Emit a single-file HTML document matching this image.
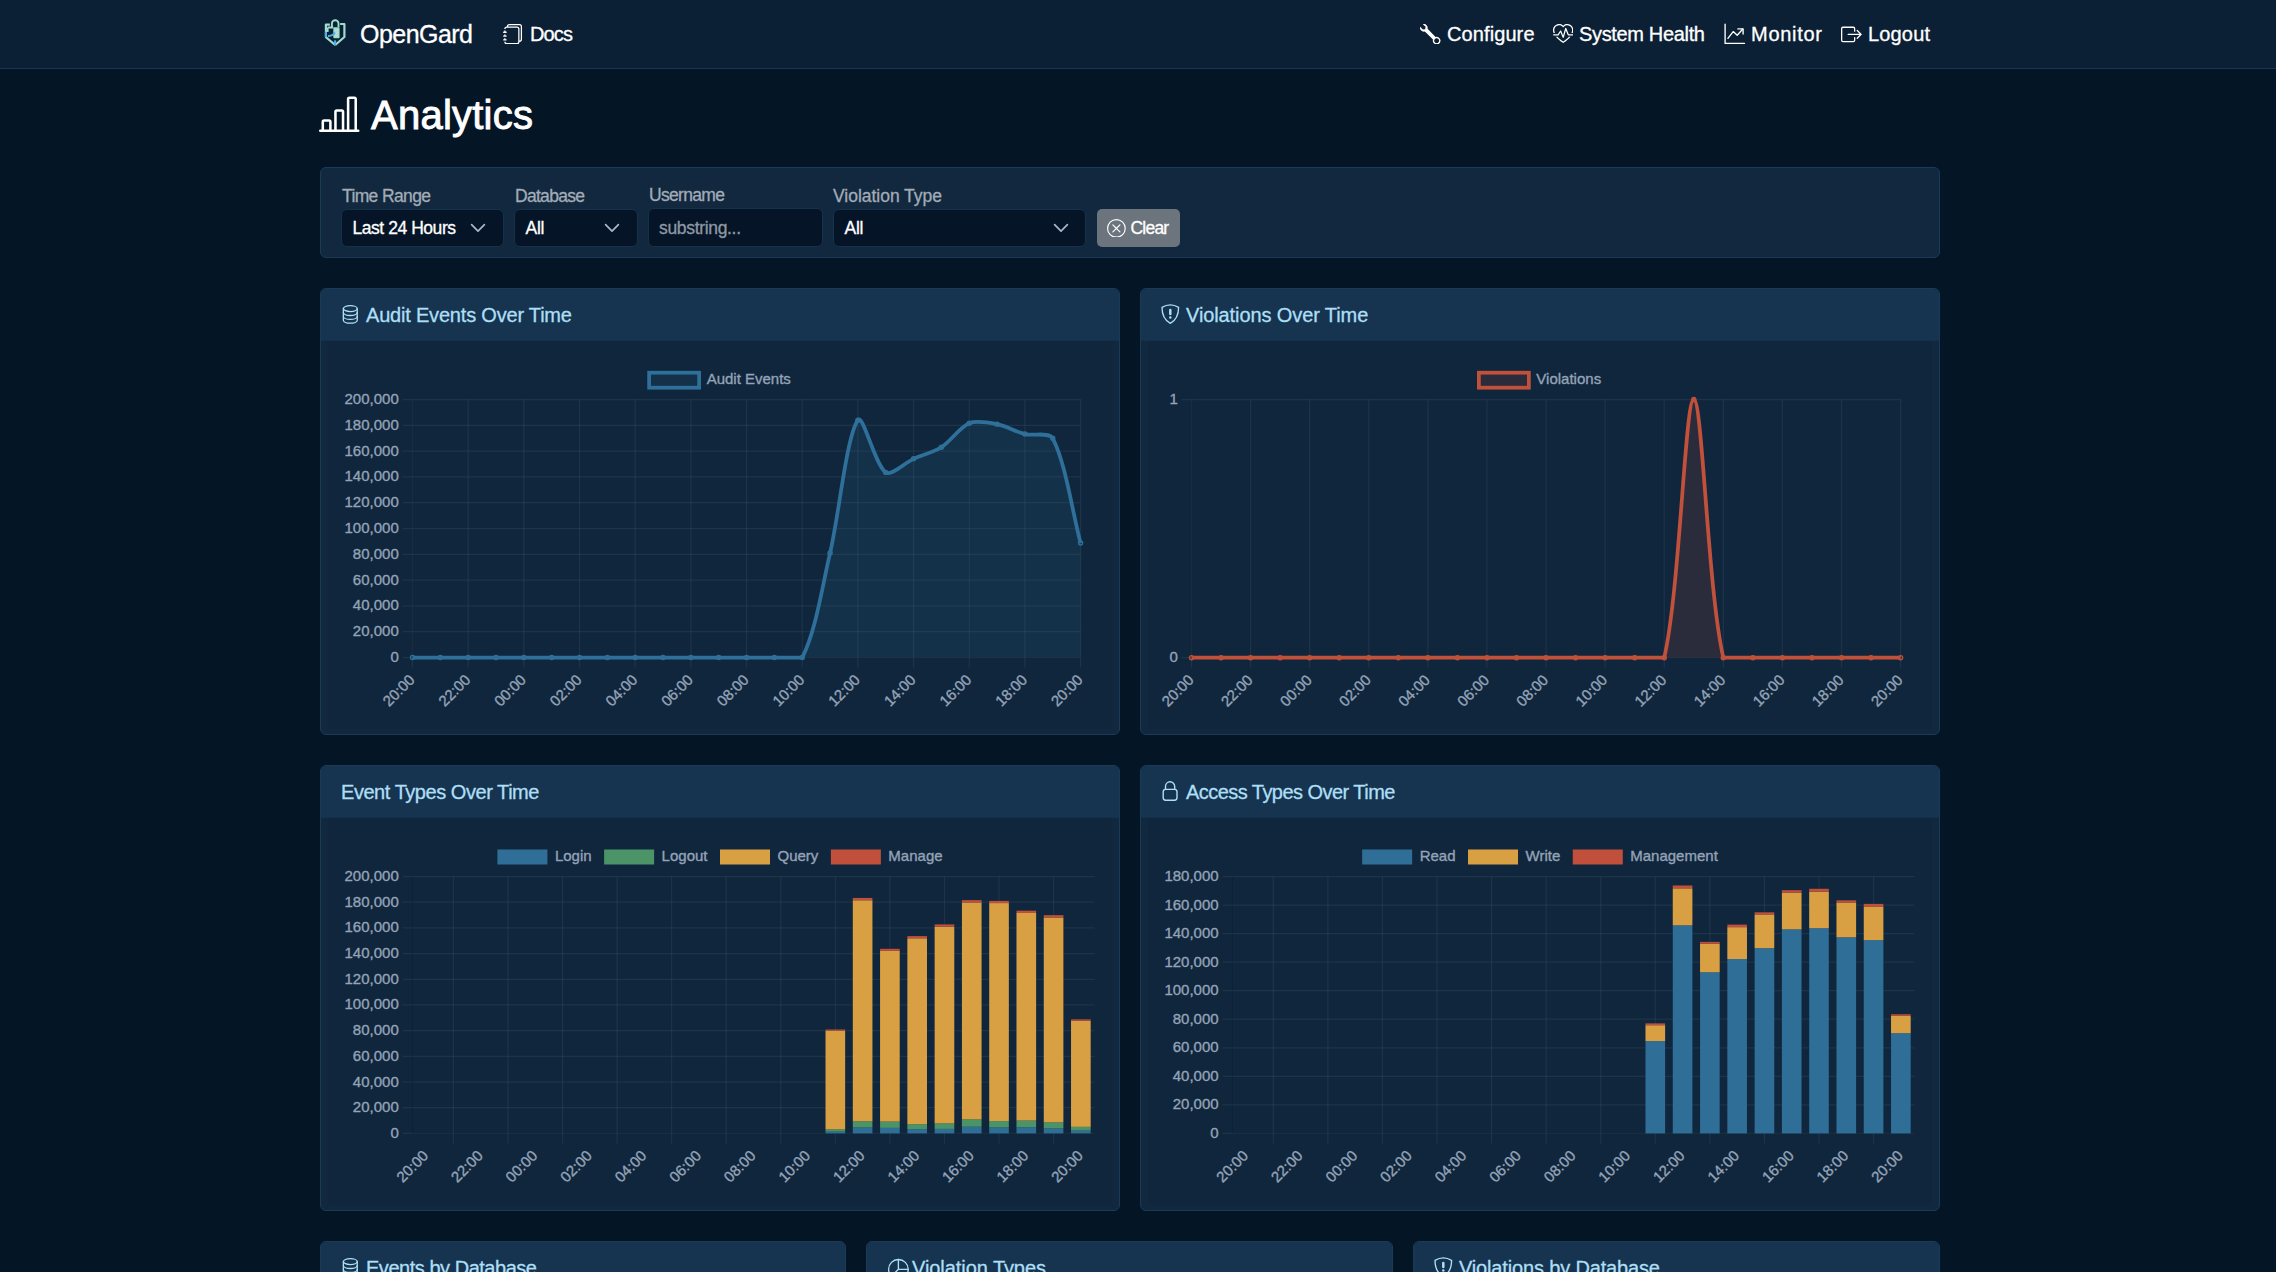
<!DOCTYPE html>
<html lang="en"><head><meta charset="utf-8"><title>OpenGard - Analytics</title>
<style>
html,body{margin:0;padding:0;background:#041526;}
body{width:2276px;height:1272px;overflow:hidden;background:#041526;position:relative;font-family:"Liberation Sans",sans-serif;}
.t{position:absolute;white-space:nowrap;line-height:1;}
svg text{font-family:"Liberation Sans",sans-serif;stroke:#94a3b8;stroke-width:0.35px;}
</style></head><body>

<nav>
<div style="position:absolute;left:0.00px;top:0.00px;width:2276.00px;height:68.00px;background:#0b1f35;border-bottom:1px solid #183651;"></div>
<svg style="position:absolute;left:318px;top:16px" width="32" height="34" viewBox="318 16 32 34">
<path d="M329.9 24.6H325.9V37.1L335.2 45M340.1 24H344.4V37L335.2 45" fill="none" stroke="#9edccd" stroke-width="2.2" stroke-linejoin="round"/>
<path d="M331.9 27.2V23.6A3.3 3.3 0 0 1 338.5 23.6V27.2" fill="none" stroke="#9edccd" stroke-width="1.9"/>
<rect x="333.3" y="27.2" width="6.3" height="11" rx="0.9" fill="#9edccd"/>
<path d="M335 30.3h3.2M335 33h3.2M335 35.7h3.2" stroke="#d8f2ec" stroke-width="0.5"/>
<path d="M327.7 27.5H333.3M327.7 27.5V32" fill="none" stroke="#9edccd" stroke-width="1.8"/>
<path d="M325.9 31.8V37.3" fill="none" stroke="#4aaee8" stroke-width="2"/>
<path d="M328 36Q332.6 36.3 335 32.6" fill="none" stroke="#4aaee8" stroke-width="1.9"/>
<path d="M335.1 40.3V45.4" stroke="#4aaee8" stroke-width="2.1"/>
</svg>
<span class="t " style="left:360.00px;top:21.83px;font-size:25.00px;color:#ffffff;font-weight:normal;letter-spacing:-0.538px;-webkit-text-stroke:0.3px #ffffff;">OpenGard</span>
<svg style="position:absolute;left:502.90px;top:23.90px" width="20.30" height="20.30" viewBox="0 0 16 16"><path fill="#ffffff" fill-rule="evenodd" d="M5 0h8a2 2 0 0 1 2 2v10a2 2 0 0 1-2 2 2 2 0 0 1-2 2H3a2 2 0 0 1-2-2h1a1 1 0 0 0 1 1h8a1 1 0 0 0 1-1V4a1 1 0 0 0-1-1H3a1 1 0 0 0-1 1H1a2 2 0 0 1 2-2h8a2 2 0 0 1 2 2v9a1 1 0 0 0 1-1V2a1 1 0 0 0-1-1H5a1 1 0 0 0-1 1H3a2 2 0 0 1 2-2zM1 6v-.5a.5.5 0 0 1 1 0V6h.5a.5.5 0 0 1 0 1h-2a.5.5 0 0 1 0-1H1zm0 3v-.5a.5.5 0 0 1 1 0V9h.5a.5.5 0 0 1 0 1h-2a.5.5 0 0 1 0-1H1zm0 3v-.5a.5.5 0 0 1 1 0V12h.5a.5.5 0 0 1 0 1h-2a.5.5 0 0 1 0-1H1z"/></svg>
<span class="t " style="left:530.00px;top:24.07px;font-size:20.00px;color:#ffffff;font-weight:normal;letter-spacing:-0.854px;-webkit-text-stroke:0.3px #ffffff;">Docs</span>
<svg style="position:absolute;left:1420.20px;top:23.60px" width="20.50" height="20.50" viewBox="0 0 16 16"><path fill="#ffffff" fill-rule="evenodd" d="M.102 2.223A3.004 3.004 0 0 0 3.78 5.897l6.341 6.252A3.003 3.003 0 0 0 13 16a3 3 0 1 0-.851-5.878L5.897 3.781A3.004 3.004 0 0 0 2.223.1l2.141 2.142L4 4l-1.757.364zm13.37 9.019.528.026.287.445.445.287.026.529L15 13l-.242.471-.026.529-.445.287-.287.445-.529.026L13 15l-.471-.242-.529-.026-.287-.445-.445-.287-.026-.529L11 13l.242-.471.026-.529.445-.287.287-.445.529-.026L13 11z"/></svg>
<span class="t " style="left:1447.00px;top:23.67px;font-size:20.00px;color:#ffffff;font-weight:normal;letter-spacing:0.098px;-webkit-text-stroke:0.3px #ffffff;">Configure</span>
<svg style="position:absolute;left:1552.50px;top:23.60px" width="20.40" height="20.40" viewBox="0 0 16 16"><path fill="#ffffff" fill-rule="evenodd" d="m8 2.748-.717-.737C5.6.281 2.514.878 1.4 3.053.918 3.995.78 5.323 1.508 7H.43c-2.128-5.697 4.165-8.83 7.394-5.857.06.055.119.112.176.171a3.12 3.12 0 0 1 .176-.17c3.23-2.974 9.522.159 7.394 5.856h-1.078c.728-1.677.59-3.005.108-3.947C13.486.878 10.4.28 8.717 2.01L8 2.748ZM2.212 10h1.315C4.593 11.183 6.05 12.458 8 13.795c1.949-1.337 3.407-2.612 4.473-3.795h1.315c-1.265 1.566-3.14 3.25-5.788 5-2.648-1.75-4.523-3.434-5.788-5ZM10.464 3.314a.5.5 0 0 0-.945.049L7.921 8.956 6.464 5.314a.5.5 0 0 0-.88-.091L3.732 8H.5a.5.5 0 0 0 0 1H4a.5.5 0 0 0 .416-.223l1.473-2.209 1.647 4.118a.5.5 0 0 0 .945-.049l1.598-5.593 1.457 3.642A.5.5 0 0 0 12 9h3.5a.5.5 0 0 0 0-1h-3.162l-1.874-4.686Z"/></svg>
<span class="t " style="left:1579.00px;top:23.67px;font-size:20.00px;color:#ffffff;font-weight:normal;letter-spacing:-0.339px;-webkit-text-stroke:0.3px #ffffff;">System Health</span>
<svg style="position:absolute;left:1718px;top:18px;overflow:visible" width="32" height="32" viewBox="1718 18 32 32" fill="none" stroke="#fff" stroke-width="1.35" stroke-linecap="round" stroke-linejoin="round"><path d="M1725.1 24.2V43.4H1744.5"/><path d="M1727.9 38.3L1733.2 31.6L1737.2 35.3L1742.6 29.2"/><path d="M1737.9 28.9H1743.1V34"/></svg>
<span class="t " style="left:1751.00px;top:23.67px;font-size:20.00px;color:#ffffff;font-weight:normal;letter-spacing:0.719px;-webkit-text-stroke:0.3px #ffffff;">Monitor</span>
<svg style="position:absolute;left:1841.00px;top:23.80px" width="20.80" height="20.80" viewBox="0 0 16 16"><path fill="#ffffff" fill-rule="evenodd" d="M10 12.5a.5.5 0 0 1-.5.5h-8a.5.5 0 0 1-.5-.5v-9a.5.5 0 0 1 .5-.5h8a.5.5 0 0 1 .5.5v2a.5.5 0 0 0 1 0v-2A1.5 1.5 0 0 0 9.5 2h-8A1.5 1.5 0 0 0 0 3.5v9A1.5 1.5 0 0 0 1.5 14h8a1.5 1.5 0 0 0 1.5-1.5v-2a.5.5 0 0 0-1 0v2zM15.854 8.354a.5.5 0 0 0 0-.708l-3-3a.5.5 0 0 0-.708.708L14.293 7.5H5.5a.5.5 0 0 0 0 1h8.793l-2.147 2.146a.5.5 0 0 0 .708.708l3-3z"/></svg>
<span class="t " style="left:1868.00px;top:23.67px;font-size:20.00px;color:#ffffff;font-weight:normal;letter-spacing:0.163px;-webkit-text-stroke:0.3px #ffffff;">Logout</span>
</nav>
<main>
<svg style="position:absolute;left:319.20px;top:93.60px" width="40.50" height="40.50" viewBox="0 0 16 16"><path fill="#ffffff" fill-rule="evenodd" d="M11 2a1 1 0 0 1 1-1h2a1 1 0 0 1 1 1v12h.5a.5.5 0 0 1 0 1H.5a.5.5 0 0 1 0-1H1v-3a1 1 0 0 1 1-1h2a1 1 0 0 1 1 1v3h1V7a1 1 0 0 1 1-1h2a1 1 0 0 1 1 1v7h1V2zm1 12h2V2h-2v12zm-3 0V7H7v7h2zm-5 0v-3H2v3h2z"/></svg>
<span class="t " style="left:371.00px;top:95.13px;font-size:40.00px;color:#ffffff;font-weight:normal;letter-spacing:0.240px;-webkit-text-stroke:0.9px #fff;">Analytics</span>
<div style="position:absolute;left:320.00px;top:167.00px;width:1620.00px;height:91.00px;box-sizing:border-box;background:#11283f;border:1px solid #1a3b58;border-radius:6px;"></div>
<span class="t " style="left:342.00px;top:187.98px;font-size:17.50px;color:#a2acb7;font-weight:normal;letter-spacing:-0.630px;-webkit-text-stroke:0.3px #a2acb7;">Time Range</span>
<div style="position:absolute;left:341.40px;top:209.20px;width:162.35px;height:37.60px;box-sizing:border-box;background:#051426;border:1px solid #15324b;border-radius:6px;"></div>
<span class="t " style="left:352.50px;top:220.48px;font-size:17.50px;color:#ffffff;font-weight:normal;letter-spacing:-0.454px;-webkit-text-stroke:0.3px #ffffff;">Last 24 Hours</span>
<svg style="position:absolute;left:470.00px;top:222.50px" width="16" height="10" viewBox="0 0 16 10"><path d="M1.6 1.6 8 8.2 14.4 1.6" fill="none" stroke="#a9b6c4" stroke-width="1.7" stroke-linecap="round" stroke-linejoin="round"/></svg>
<span class="t " style="left:515.00px;top:187.98px;font-size:17.50px;color:#a2acb7;font-weight:normal;letter-spacing:-0.703px;-webkit-text-stroke:0.3px #a2acb7;">Database</span>
<div style="position:absolute;left:514.00px;top:209.20px;width:123.60px;height:37.60px;box-sizing:border-box;background:#051426;border:1px solid #15324b;border-radius:6px;"></div>
<span class="t " style="left:525.50px;top:220.48px;font-size:17.50px;color:#ffffff;font-weight:normal;letter-spacing:-0.227px;-webkit-text-stroke:0.3px #ffffff;">All</span>
<svg style="position:absolute;left:604.00px;top:222.50px" width="16" height="10" viewBox="0 0 16 10"><path d="M1.6 1.6 8 8.2 14.4 1.6" fill="none" stroke="#a9b6c4" stroke-width="1.7" stroke-linecap="round" stroke-linejoin="round"/></svg>
<span class="t " style="left:649.00px;top:187.18px;font-size:17.50px;color:#a2acb7;font-weight:normal;letter-spacing:-0.676px;-webkit-text-stroke:0.3px #a2acb7;">Username</span>
<div style="position:absolute;left:648.20px;top:208.40px;width:174.40px;height:38.40px;box-sizing:border-box;background:#051426;border:1px solid #15324b;border-radius:6px;"></div>
<span class="t " style="left:659.00px;top:220.18px;font-size:17.50px;color:#8e99a5;font-weight:normal;letter-spacing:-0.327px;-webkit-text-stroke:0.3px #8e99a5;">substring...</span>
<span class="t " style="left:833.00px;top:187.98px;font-size:17.50px;color:#a2acb7;font-weight:normal;letter-spacing:-0.024px;-webkit-text-stroke:0.3px #a2acb7;">Violation Type</span>
<div style="position:absolute;left:833.20px;top:209.20px;width:253.00px;height:37.60px;box-sizing:border-box;background:#051426;border:1px solid #15324b;border-radius:6px;"></div>
<span class="t " style="left:844.50px;top:220.48px;font-size:17.50px;color:#ffffff;font-weight:normal;letter-spacing:-0.227px;-webkit-text-stroke:0.3px #ffffff;">All</span>
<svg style="position:absolute;left:1053.00px;top:222.50px" width="16" height="10" viewBox="0 0 16 10"><path d="M1.6 1.6 8 8.2 14.4 1.6" fill="none" stroke="#a9b6c4" stroke-width="1.7" stroke-linecap="round" stroke-linejoin="round"/></svg>
<div style="position:absolute;left:1097.00px;top:209.00px;width:83.00px;height:38.00px;box-sizing:border-box;background:#6c757d;border-radius:5px;"></div>
<svg style="position:absolute;left:1107.00px;top:218.60px" width="18.80" height="18.80" viewBox="0 0 16 16"><path fill="#ffffff" fill-rule="evenodd" d="M8 15A7 7 0 1 1 8 1a7 7 0 0 1 0 14zm0 1A8 8 0 1 0 8 0a8 8 0 0 0 0 16zM4.646 4.646a.5.5 0 0 1 .708 0L8 7.293l2.646-2.647a.5.5 0 0 1 .708.708L8.707 8l2.647 2.646a.5.5 0 0 1-.708.708L8 8.707l-2.647 2.647a.5.5 0 0 1-.708-.708L7.293 8 4.646 5.354a.5.5 0 0 1 0-.708z"/></svg>
<span class="t " style="left:1130.50px;top:220.18px;font-size:17.50px;color:#ffffff;font-weight:normal;letter-spacing:-0.782px;-webkit-text-stroke:0.3px #ffffff;">Clear</span>
<div style="position:absolute;left:320.00px;top:288.00px;width:800.00px;height:447.00px;box-sizing:border-box;background:#11283f;border:1px solid #1a3b58;border-radius:6px;overflow:hidden;"><div style="position:absolute;left:0;top:0;right:0;height:51px;background:#16344f;border-bottom:1px solid #15304a"></div><div style="position:absolute;left:7px;right:7px;top:52px;bottom:5px;background:rgba(0,0,0,0.035)"></div></div>
<svg style="position:absolute;left:342.00px;top:304.30px;overflow:visible" width="30" height="30" viewBox="0 0 30 30" fill="none" stroke="#addff5" stroke-width="1.30" stroke-linecap="round" stroke-linejoin="round"><ellipse cx="8.3" cy="4.6" rx="6.95" ry="3"/><path d="M1.35 4.6V16.2A6.95 3 0 0 0 15.25 16.2V4.6"/><path d="M1.35 8.5A6.95 3 0 0 0 15.25 8.5"/><path d="M1.35 12.4A6.95 3 0 0 0 15.25 12.4"/></svg>
<span class="t " style="left:366.00px;top:305.07px;font-size:20.00px;color:#addff5;font-weight:normal;letter-spacing:-0.196px;-webkit-text-stroke:0.3px #addff5;">Audit Events Over Time</span>
<div style="position:absolute;left:1140.00px;top:288.00px;width:800.00px;height:447.00px;box-sizing:border-box;background:#11283f;border:1px solid #1a3b58;border-radius:6px;overflow:hidden;"><div style="position:absolute;left:0;top:0;right:0;height:51px;background:#16344f;border-bottom:1px solid #15304a"></div><div style="position:absolute;left:7px;right:7px;top:52px;bottom:5px;background:rgba(0,0,0,0.035)"></div></div>
<svg style="position:absolute;left:1160.00px;top:303.20px;overflow:visible" width="30" height="30" viewBox="0 0 30 30" fill="none" stroke="#addff5" stroke-width="1.35" stroke-linecap="round" stroke-linejoin="round"><path d="M2 4.3Q10.3 -0.6 18.6 4.3C18.6 12 15.6 17.6 10.3 20.3C5 17.6 2 12 2 4.3Z"/><path d="M10.3 6.9V10.9" stroke-width="2.5"/><circle cx="10.3" cy="14.6" r="1.25" fill="#addff5" stroke="none"/></svg>
<span class="t " style="left:1186.00px;top:305.07px;font-size:20.00px;color:#addff5;font-weight:normal;letter-spacing:-0.099px;-webkit-text-stroke:0.3px #addff5;">Violations Over Time</span>
<div style="position:absolute;left:320.00px;top:765.00px;width:800.00px;height:446.00px;box-sizing:border-box;background:#11283f;border:1px solid #1a3b58;border-radius:6px;overflow:hidden;"><div style="position:absolute;left:0;top:0;right:0;height:51px;background:#16344f;border-bottom:1px solid #15304a"></div><div style="position:absolute;left:7px;right:7px;top:52px;bottom:5px;background:rgba(0,0,0,0.035)"></div></div>
<span class="t " style="left:341.00px;top:782.07px;font-size:20.00px;color:#addff5;font-weight:normal;letter-spacing:-0.452px;-webkit-text-stroke:0.3px #addff5;">Event Types Over Time</span>
<div style="position:absolute;left:1140.00px;top:765.00px;width:800.00px;height:446.00px;box-sizing:border-box;background:#11283f;border:1px solid #1a3b58;border-radius:6px;overflow:hidden;"><div style="position:absolute;left:0;top:0;right:0;height:51px;background:#16344f;border-bottom:1px solid #15304a"></div><div style="position:absolute;left:7px;right:7px;top:52px;bottom:5px;background:rgba(0,0,0,0.035)"></div></div>
<svg style="position:absolute;left:1161.30px;top:781.00px;overflow:visible" width="30" height="30" viewBox="0 0 30 30" fill="none" stroke="#addff5" stroke-width="1.40" stroke-linecap="round" stroke-linejoin="round"><rect x="2.2" y="8.4" width="13.8" height="10.8" rx="2.4"/><path d="M4.5 8.4V5.4a4.6 4.6 0 0 1 9.2 0v3"/></svg>
<span class="t " style="left:1186.00px;top:782.07px;font-size:20.00px;color:#addff5;font-weight:normal;letter-spacing:-0.545px;-webkit-text-stroke:0.3px #addff5;">Access Types Over Time</span>
<div style="position:absolute;left:320.00px;top:1241.00px;width:526.00px;height:159.00px;box-sizing:border-box;background:#11283f;border:1px solid #1a3b58;border-radius:6px;overflow:hidden;"><div style="position:absolute;left:0;top:0;right:0;height:51px;background:#16344f;border-bottom:1px solid #15304a"></div><div style="position:absolute;left:7px;right:7px;top:52px;bottom:5px;background:rgba(0,0,0,0.035)"></div></div>
<svg style="position:absolute;left:342.00px;top:1257.30px;overflow:visible" width="30" height="30" viewBox="0 0 30 30" fill="none" stroke="#addff5" stroke-width="1.30" stroke-linecap="round" stroke-linejoin="round"><ellipse cx="8.3" cy="4.6" rx="6.95" ry="3"/><path d="M1.35 4.6V16.2A6.95 3 0 0 0 15.25 16.2V4.6"/><path d="M1.35 8.5A6.95 3 0 0 0 15.25 8.5"/><path d="M1.35 12.4A6.95 3 0 0 0 15.25 12.4"/></svg>
<span class="t " style="left:366.00px;top:1258.07px;font-size:20.00px;color:#addff5;font-weight:normal;letter-spacing:-0.472px;-webkit-text-stroke:0.3px #addff5;">Events by Database</span>
<div style="position:absolute;left:866.00px;top:1241.00px;width:527.00px;height:159.00px;box-sizing:border-box;background:#11283f;border:1px solid #1a3b58;border-radius:6px;overflow:hidden;"><div style="position:absolute;left:0;top:0;right:0;height:51px;background:#16344f;border-bottom:1px solid #15304a"></div><div style="position:absolute;left:7px;right:7px;top:52px;bottom:5px;background:rgba(0,0,0,0.035)"></div></div>
<svg style="position:absolute;left:887.50px;top:1257.00px;overflow:visible" width="30" height="30" viewBox="0 0 30 30" fill="none" stroke="#addff5" stroke-width="1.35" stroke-linecap="round" stroke-linejoin="round"><circle cx="10.4" cy="12.3" r="9.8"/><path d="M10.4 2.5V12.3H20.2M10.4 12.3 3.5 19.2"/></svg>
<span class="t " style="left:912.00px;top:1258.07px;font-size:20.00px;color:#addff5;font-weight:normal;letter-spacing:-0.066px;-webkit-text-stroke:0.3px #addff5;">Violation Types</span>
<div style="position:absolute;left:1413.00px;top:1241.00px;width:527.00px;height:159.00px;box-sizing:border-box;background:#11283f;border:1px solid #1a3b58;border-radius:6px;overflow:hidden;"><div style="position:absolute;left:0;top:0;right:0;height:51px;background:#16344f;border-bottom:1px solid #15304a"></div><div style="position:absolute;left:7px;right:7px;top:52px;bottom:5px;background:rgba(0,0,0,0.035)"></div></div>
<svg style="position:absolute;left:1433.00px;top:1256.20px;overflow:visible" width="30" height="30" viewBox="0 0 30 30" fill="none" stroke="#addff5" stroke-width="1.35" stroke-linecap="round" stroke-linejoin="round"><path d="M2 4.3Q10.3 -0.6 18.6 4.3C18.6 12 15.6 17.6 10.3 20.3C5 17.6 2 12 2 4.3Z"/><path d="M10.3 6.9V10.9" stroke-width="2.5"/><circle cx="10.3" cy="14.6" r="1.25" fill="#addff5" stroke="none"/></svg>
<span class="t " style="left:1459.00px;top:1258.07px;font-size:20.00px;color:#addff5;font-weight:normal;letter-spacing:-0.154px;-webkit-text-stroke:0.3px #addff5;">Violations by Database</span>
<svg style="position:absolute;left:322.00px;top:345.00px;overflow:visible" width="796.00" height="388.00" viewBox="322.00 345.00 796.00 388.00" ><rect x="649.14" y="372.70" width="50.00" height="15.00" fill="rgba(46,112,155,0.15)" stroke="#2f709b" stroke-width="3.75"/><text x="706.64" y="383.90" font-size="15" fill="#94a3b8">Audit Events</text><line x1="402.50" y1="657.50" x2="1080.60" y2="657.50" stroke="rgba(148,163,184,0.1)" stroke-width="1.25"/><text x="398.75" y="662.00" font-size="15" fill="#94a3b8" text-anchor="end">0</text><line x1="402.50" y1="631.70" x2="1080.60" y2="631.70" stroke="rgba(148,163,184,0.1)" stroke-width="1.25"/><text x="398.75" y="636.20" font-size="15" fill="#94a3b8" text-anchor="end">20,000</text><line x1="402.50" y1="605.90" x2="1080.60" y2="605.90" stroke="rgba(148,163,184,0.1)" stroke-width="1.25"/><text x="398.75" y="610.40" font-size="15" fill="#94a3b8" text-anchor="end">40,000</text><line x1="402.50" y1="580.10" x2="1080.60" y2="580.10" stroke="rgba(148,163,184,0.1)" stroke-width="1.25"/><text x="398.75" y="584.60" font-size="15" fill="#94a3b8" text-anchor="end">60,000</text><line x1="402.50" y1="554.30" x2="1080.60" y2="554.30" stroke="rgba(148,163,184,0.1)" stroke-width="1.25"/><text x="398.75" y="558.80" font-size="15" fill="#94a3b8" text-anchor="end">80,000</text><line x1="402.50" y1="528.50" x2="1080.60" y2="528.50" stroke="rgba(148,163,184,0.1)" stroke-width="1.25"/><text x="398.75" y="533.00" font-size="15" fill="#94a3b8" text-anchor="end">100,000</text><line x1="402.50" y1="502.70" x2="1080.60" y2="502.70" stroke="rgba(148,163,184,0.1)" stroke-width="1.25"/><text x="398.75" y="507.20" font-size="15" fill="#94a3b8" text-anchor="end">120,000</text><line x1="402.50" y1="476.90" x2="1080.60" y2="476.90" stroke="rgba(148,163,184,0.1)" stroke-width="1.25"/><text x="398.75" y="481.40" font-size="15" fill="#94a3b8" text-anchor="end">140,000</text><line x1="402.50" y1="451.10" x2="1080.60" y2="451.10" stroke="rgba(148,163,184,0.1)" stroke-width="1.25"/><text x="398.75" y="455.60" font-size="15" fill="#94a3b8" text-anchor="end">160,000</text><line x1="402.50" y1="425.30" x2="1080.60" y2="425.30" stroke="rgba(148,163,184,0.1)" stroke-width="1.25"/><text x="398.75" y="429.80" font-size="15" fill="#94a3b8" text-anchor="end">180,000</text><line x1="402.50" y1="399.50" x2="1080.60" y2="399.50" stroke="rgba(148,163,184,0.1)" stroke-width="1.25"/><text x="398.75" y="404.00" font-size="15" fill="#94a3b8" text-anchor="end">200,000</text><line x1="412.50" y1="399.50" x2="412.50" y2="667.50" stroke="rgba(148,163,184,0.1)" stroke-width="1.25"/><line x1="468.18" y1="399.50" x2="468.18" y2="667.50" stroke="rgba(148,163,184,0.1)" stroke-width="1.25"/><line x1="523.85" y1="399.50" x2="523.85" y2="667.50" stroke="rgba(148,163,184,0.1)" stroke-width="1.25"/><line x1="579.52" y1="399.50" x2="579.52" y2="667.50" stroke="rgba(148,163,184,0.1)" stroke-width="1.25"/><line x1="635.20" y1="399.50" x2="635.20" y2="667.50" stroke="rgba(148,163,184,0.1)" stroke-width="1.25"/><line x1="690.88" y1="399.50" x2="690.88" y2="667.50" stroke="rgba(148,163,184,0.1)" stroke-width="1.25"/><line x1="746.55" y1="399.50" x2="746.55" y2="667.50" stroke="rgba(148,163,184,0.1)" stroke-width="1.25"/><line x1="802.22" y1="399.50" x2="802.22" y2="667.50" stroke="rgba(148,163,184,0.1)" stroke-width="1.25"/><line x1="857.90" y1="399.50" x2="857.90" y2="667.50" stroke="rgba(148,163,184,0.1)" stroke-width="1.25"/><line x1="913.57" y1="399.50" x2="913.57" y2="667.50" stroke="rgba(148,163,184,0.1)" stroke-width="1.25"/><line x1="969.25" y1="399.50" x2="969.25" y2="667.50" stroke="rgba(148,163,184,0.1)" stroke-width="1.25"/><line x1="1024.92" y1="399.50" x2="1024.92" y2="667.50" stroke="rgba(148,163,184,0.1)" stroke-width="1.25"/><line x1="1080.60" y1="399.50" x2="1080.60" y2="667.50" stroke="rgba(148,163,184,0.1)" stroke-width="1.25"/><line x1="412.50" y1="399.50" x2="412.50" y2="657.50" stroke="rgba(0,0,0,0.1)" stroke-width="1.25"/><line x1="412.50" y1="657.50" x2="1080.60" y2="657.50" stroke="rgba(0,0,0,0.1)" stroke-width="1.25"/><text x="411.80" y="682.35" font-size="15" fill="#94a3b8" text-anchor="end" transform="rotate(-45 411.80 676.95)">20:00</text><text x="467.48" y="682.35" font-size="15" fill="#94a3b8" text-anchor="end" transform="rotate(-45 467.48 676.95)">22:00</text><text x="523.15" y="682.35" font-size="15" fill="#94a3b8" text-anchor="end" transform="rotate(-45 523.15 676.95)">00:00</text><text x="578.82" y="682.35" font-size="15" fill="#94a3b8" text-anchor="end" transform="rotate(-45 578.82 676.95)">02:00</text><text x="634.50" y="682.35" font-size="15" fill="#94a3b8" text-anchor="end" transform="rotate(-45 634.50 676.95)">04:00</text><text x="690.17" y="682.35" font-size="15" fill="#94a3b8" text-anchor="end" transform="rotate(-45 690.17 676.95)">06:00</text><text x="745.85" y="682.35" font-size="15" fill="#94a3b8" text-anchor="end" transform="rotate(-45 745.85 676.95)">08:00</text><text x="801.52" y="682.35" font-size="15" fill="#94a3b8" text-anchor="end" transform="rotate(-45 801.52 676.95)">10:00</text><text x="857.20" y="682.35" font-size="15" fill="#94a3b8" text-anchor="end" transform="rotate(-45 857.20 676.95)">12:00</text><text x="912.87" y="682.35" font-size="15" fill="#94a3b8" text-anchor="end" transform="rotate(-45 912.87 676.95)">14:00</text><text x="968.55" y="682.35" font-size="15" fill="#94a3b8" text-anchor="end" transform="rotate(-45 968.55 676.95)">16:00</text><text x="1024.22" y="682.35" font-size="15" fill="#94a3b8" text-anchor="end" transform="rotate(-45 1024.22 676.95)">18:00</text><text x="1079.90" y="682.35" font-size="15" fill="#94a3b8" text-anchor="end" transform="rotate(-45 1079.90 676.95)">20:00</text><path d="M412.50 657.50 C420.85 657.50 431.99 657.50 440.34 657.50 C448.69 657.50 459.82 657.50 468.18 657.50 C476.53 657.50 487.66 657.50 496.01 657.50 C504.36 657.50 515.50 657.50 523.85 657.50 C532.20 657.50 543.34 657.50 551.69 657.50 C560.04 657.50 571.17 657.50 579.52 657.50 C587.88 657.50 599.01 657.50 607.36 657.50 C615.71 657.50 626.85 657.50 635.20 657.50 C643.55 657.50 654.69 657.50 663.04 657.50 C671.39 657.50 682.52 657.50 690.88 657.50 C699.23 657.50 710.36 657.50 718.71 657.50 C727.06 657.50 738.20 657.50 746.55 657.50 C754.90 657.50 766.04 657.50 774.39 657.50 C782.74 657.50 798.81 657.50 802.22 657.50 C815.51 632.57 822.66 584.58 830.06 553.01 C839.36 513.37 846.27 436.98 857.90 420.14 C862.97 412.80 874.77 464.76 885.74 472.38 C891.47 476.37 905.11 462.66 913.57 458.84 C921.82 455.12 933.88 452.04 941.41 447.23 C950.59 441.36 959.75 427.18 969.25 423.24 C976.45 420.25 988.98 422.56 997.09 424.14 C1005.69 425.81 1016.37 431.89 1024.92 434.07 C1033.07 436.15 1049.32 431.58 1052.76 438.33 C1066.02 464.29 1072.25 511.65 1080.60 543.08 L1080.60 657.50 L412.50 657.50 Z" fill="rgba(46,112,155,0.15)" stroke="none"/><path d="M412.50 657.50 C420.85 657.50 431.99 657.50 440.34 657.50 C448.69 657.50 459.82 657.50 468.18 657.50 C476.53 657.50 487.66 657.50 496.01 657.50 C504.36 657.50 515.50 657.50 523.85 657.50 C532.20 657.50 543.34 657.50 551.69 657.50 C560.04 657.50 571.17 657.50 579.52 657.50 C587.88 657.50 599.01 657.50 607.36 657.50 C615.71 657.50 626.85 657.50 635.20 657.50 C643.55 657.50 654.69 657.50 663.04 657.50 C671.39 657.50 682.52 657.50 690.88 657.50 C699.23 657.50 710.36 657.50 718.71 657.50 C727.06 657.50 738.20 657.50 746.55 657.50 C754.90 657.50 766.04 657.50 774.39 657.50 C782.74 657.50 798.81 657.50 802.22 657.50 C815.51 632.57 822.66 584.58 830.06 553.01 C839.36 513.37 846.27 436.98 857.90 420.14 C862.97 412.80 874.77 464.76 885.74 472.38 C891.47 476.37 905.11 462.66 913.57 458.84 C921.82 455.12 933.88 452.04 941.41 447.23 C950.59 441.36 959.75 427.18 969.25 423.24 C976.45 420.25 988.98 422.56 997.09 424.14 C1005.69 425.81 1016.37 431.89 1024.92 434.07 C1033.07 436.15 1049.32 431.58 1052.76 438.33 C1066.02 464.29 1072.25 511.65 1080.60 543.08" fill="none" stroke="#2f709b" stroke-width="3.75" stroke-linejoin="round"/><circle cx="412.50" cy="657.50" r="2.1" fill="rgba(46,112,155,0.15)" stroke="#2f709b" stroke-width="1.25"/><circle cx="440.34" cy="657.50" r="2.1" fill="rgba(46,112,155,0.15)" stroke="#2f709b" stroke-width="1.25"/><circle cx="468.18" cy="657.50" r="2.1" fill="rgba(46,112,155,0.15)" stroke="#2f709b" stroke-width="1.25"/><circle cx="496.01" cy="657.50" r="2.1" fill="rgba(46,112,155,0.15)" stroke="#2f709b" stroke-width="1.25"/><circle cx="523.85" cy="657.50" r="2.1" fill="rgba(46,112,155,0.15)" stroke="#2f709b" stroke-width="1.25"/><circle cx="551.69" cy="657.50" r="2.1" fill="rgba(46,112,155,0.15)" stroke="#2f709b" stroke-width="1.25"/><circle cx="579.52" cy="657.50" r="2.1" fill="rgba(46,112,155,0.15)" stroke="#2f709b" stroke-width="1.25"/><circle cx="607.36" cy="657.50" r="2.1" fill="rgba(46,112,155,0.15)" stroke="#2f709b" stroke-width="1.25"/><circle cx="635.20" cy="657.50" r="2.1" fill="rgba(46,112,155,0.15)" stroke="#2f709b" stroke-width="1.25"/><circle cx="663.04" cy="657.50" r="2.1" fill="rgba(46,112,155,0.15)" stroke="#2f709b" stroke-width="1.25"/><circle cx="690.88" cy="657.50" r="2.1" fill="rgba(46,112,155,0.15)" stroke="#2f709b" stroke-width="1.25"/><circle cx="718.71" cy="657.50" r="2.1" fill="rgba(46,112,155,0.15)" stroke="#2f709b" stroke-width="1.25"/><circle cx="746.55" cy="657.50" r="2.1" fill="rgba(46,112,155,0.15)" stroke="#2f709b" stroke-width="1.25"/><circle cx="774.39" cy="657.50" r="2.1" fill="rgba(46,112,155,0.15)" stroke="#2f709b" stroke-width="1.25"/><circle cx="802.22" cy="657.50" r="2.1" fill="rgba(46,112,155,0.15)" stroke="#2f709b" stroke-width="1.25"/><circle cx="830.06" cy="553.01" r="2.1" fill="rgba(46,112,155,0.15)" stroke="#2f709b" stroke-width="1.25"/><circle cx="857.90" cy="420.14" r="2.1" fill="rgba(46,112,155,0.15)" stroke="#2f709b" stroke-width="1.25"/><circle cx="885.74" cy="472.38" r="2.1" fill="rgba(46,112,155,0.15)" stroke="#2f709b" stroke-width="1.25"/><circle cx="913.57" cy="458.84" r="2.1" fill="rgba(46,112,155,0.15)" stroke="#2f709b" stroke-width="1.25"/><circle cx="941.41" cy="447.23" r="2.1" fill="rgba(46,112,155,0.15)" stroke="#2f709b" stroke-width="1.25"/><circle cx="969.25" cy="423.24" r="2.1" fill="rgba(46,112,155,0.15)" stroke="#2f709b" stroke-width="1.25"/><circle cx="997.09" cy="424.14" r="2.1" fill="rgba(46,112,155,0.15)" stroke="#2f709b" stroke-width="1.25"/><circle cx="1024.92" cy="434.07" r="2.1" fill="rgba(46,112,155,0.15)" stroke="#2f709b" stroke-width="1.25"/><circle cx="1052.76" cy="438.33" r="2.1" fill="rgba(46,112,155,0.15)" stroke="#2f709b" stroke-width="1.25"/><circle cx="1080.60" cy="543.08" r="2.1" fill="rgba(46,112,155,0.15)" stroke="#2f709b" stroke-width="1.25"/></svg>
<svg style="position:absolute;left:1142.00px;top:345.00px;overflow:visible" width="796.00" height="388.00" viewBox="1142.00 345.00 796.00 388.00" ><rect x="1478.87" y="372.70" width="50.00" height="15.00" fill="rgba(193,81,59,0.15)" stroke="#c1513b" stroke-width="3.75"/><text x="1536.37" y="383.90" font-size="15" fill="#94a3b8">Violations</text><line x1="1181.50" y1="657.70" x2="1900.60" y2="657.70" stroke="rgba(148,163,184,0.1)" stroke-width="1.25"/><text x="1177.75" y="662.20" font-size="15" fill="#94a3b8" text-anchor="end">0</text><line x1="1181.50" y1="399.50" x2="1900.60" y2="399.50" stroke="rgba(148,163,184,0.1)" stroke-width="1.25"/><text x="1177.75" y="404.00" font-size="15" fill="#94a3b8" text-anchor="end">1</text><line x1="1191.50" y1="399.50" x2="1191.50" y2="667.70" stroke="rgba(148,163,184,0.1)" stroke-width="1.25"/><line x1="1250.59" y1="399.50" x2="1250.59" y2="667.70" stroke="rgba(148,163,184,0.1)" stroke-width="1.25"/><line x1="1309.68" y1="399.50" x2="1309.68" y2="667.70" stroke="rgba(148,163,184,0.1)" stroke-width="1.25"/><line x1="1368.78" y1="399.50" x2="1368.78" y2="667.70" stroke="rgba(148,163,184,0.1)" stroke-width="1.25"/><line x1="1427.87" y1="399.50" x2="1427.87" y2="667.70" stroke="rgba(148,163,184,0.1)" stroke-width="1.25"/><line x1="1486.96" y1="399.50" x2="1486.96" y2="667.70" stroke="rgba(148,163,184,0.1)" stroke-width="1.25"/><line x1="1546.05" y1="399.50" x2="1546.05" y2="667.70" stroke="rgba(148,163,184,0.1)" stroke-width="1.25"/><line x1="1605.14" y1="399.50" x2="1605.14" y2="667.70" stroke="rgba(148,163,184,0.1)" stroke-width="1.25"/><line x1="1664.23" y1="399.50" x2="1664.23" y2="667.70" stroke="rgba(148,163,184,0.1)" stroke-width="1.25"/><line x1="1723.32" y1="399.50" x2="1723.32" y2="667.70" stroke="rgba(148,163,184,0.1)" stroke-width="1.25"/><line x1="1782.42" y1="399.50" x2="1782.42" y2="667.70" stroke="rgba(148,163,184,0.1)" stroke-width="1.25"/><line x1="1841.51" y1="399.50" x2="1841.51" y2="667.70" stroke="rgba(148,163,184,0.1)" stroke-width="1.25"/><line x1="1900.60" y1="399.50" x2="1900.60" y2="667.70" stroke="rgba(148,163,184,0.1)" stroke-width="1.25"/><line x1="1191.50" y1="399.50" x2="1191.50" y2="657.70" stroke="rgba(0,0,0,0.1)" stroke-width="1.25"/><line x1="1191.50" y1="657.70" x2="1900.60" y2="657.70" stroke="rgba(0,0,0,0.1)" stroke-width="1.25"/><text x="1190.80" y="682.55" font-size="15" fill="#94a3b8" text-anchor="end" transform="rotate(-45 1190.80 677.15)">20:00</text><text x="1249.89" y="682.55" font-size="15" fill="#94a3b8" text-anchor="end" transform="rotate(-45 1249.89 677.15)">22:00</text><text x="1308.98" y="682.55" font-size="15" fill="#94a3b8" text-anchor="end" transform="rotate(-45 1308.98 677.15)">00:00</text><text x="1368.08" y="682.55" font-size="15" fill="#94a3b8" text-anchor="end" transform="rotate(-45 1368.08 677.15)">02:00</text><text x="1427.17" y="682.55" font-size="15" fill="#94a3b8" text-anchor="end" transform="rotate(-45 1427.17 677.15)">04:00</text><text x="1486.26" y="682.55" font-size="15" fill="#94a3b8" text-anchor="end" transform="rotate(-45 1486.26 677.15)">06:00</text><text x="1545.35" y="682.55" font-size="15" fill="#94a3b8" text-anchor="end" transform="rotate(-45 1545.35 677.15)">08:00</text><text x="1604.44" y="682.55" font-size="15" fill="#94a3b8" text-anchor="end" transform="rotate(-45 1604.44 677.15)">10:00</text><text x="1663.53" y="682.55" font-size="15" fill="#94a3b8" text-anchor="end" transform="rotate(-45 1663.53 677.15)">12:00</text><text x="1722.62" y="682.55" font-size="15" fill="#94a3b8" text-anchor="end" transform="rotate(-45 1722.62 677.15)">14:00</text><text x="1781.72" y="682.55" font-size="15" fill="#94a3b8" text-anchor="end" transform="rotate(-45 1781.72 677.15)">16:00</text><text x="1840.81" y="682.55" font-size="15" fill="#94a3b8" text-anchor="end" transform="rotate(-45 1840.81 677.15)">18:00</text><text x="1899.90" y="682.55" font-size="15" fill="#94a3b8" text-anchor="end" transform="rotate(-45 1899.90 677.15)">20:00</text><path d="M1191.50 657.70 C1200.36 657.70 1212.18 657.70 1221.05 657.70 C1229.91 657.70 1241.73 657.70 1250.59 657.70 C1259.46 657.70 1271.27 657.70 1280.14 657.70 C1289.00 657.70 1300.82 657.70 1309.68 657.70 C1318.55 657.70 1330.37 657.70 1339.23 657.70 C1348.09 657.70 1359.91 657.70 1368.78 657.70 C1377.64 657.70 1389.46 657.70 1398.32 657.70 C1407.18 657.70 1419.00 657.70 1427.87 657.70 C1436.73 657.70 1448.55 657.70 1457.41 657.70 C1466.28 657.70 1478.09 657.70 1486.96 657.70 C1495.82 657.70 1507.64 657.70 1516.50 657.70 C1525.37 657.70 1537.19 657.70 1546.05 657.70 C1554.91 657.70 1566.73 657.70 1575.60 657.70 C1584.46 657.70 1596.28 657.70 1605.14 657.70 C1614.01 657.70 1625.82 657.70 1634.69 657.70 C1643.55 657.70 1662.42 657.70 1664.23 657.70 C1680.15 588.15 1684.92 399.50 1693.78 399.50 C1702.64 399.50 1707.41 588.15 1723.32 657.70 C1725.13 657.70 1744.01 657.70 1752.87 657.70 C1761.73 657.70 1773.55 657.70 1782.42 657.70 C1791.28 657.70 1803.10 657.70 1811.96 657.70 C1820.83 657.70 1832.64 657.70 1841.51 657.70 C1850.37 657.70 1862.19 657.70 1871.05 657.70 C1879.92 657.70 1891.74 657.70 1900.60 657.70 L1900.60 657.70 L1191.50 657.70 Z" fill="rgba(193,81,59,0.15)" stroke="none"/><path d="M1191.50 657.70 C1200.36 657.70 1212.18 657.70 1221.05 657.70 C1229.91 657.70 1241.73 657.70 1250.59 657.70 C1259.46 657.70 1271.27 657.70 1280.14 657.70 C1289.00 657.70 1300.82 657.70 1309.68 657.70 C1318.55 657.70 1330.37 657.70 1339.23 657.70 C1348.09 657.70 1359.91 657.70 1368.78 657.70 C1377.64 657.70 1389.46 657.70 1398.32 657.70 C1407.18 657.70 1419.00 657.70 1427.87 657.70 C1436.73 657.70 1448.55 657.70 1457.41 657.70 C1466.28 657.70 1478.09 657.70 1486.96 657.70 C1495.82 657.70 1507.64 657.70 1516.50 657.70 C1525.37 657.70 1537.19 657.70 1546.05 657.70 C1554.91 657.70 1566.73 657.70 1575.60 657.70 C1584.46 657.70 1596.28 657.70 1605.14 657.70 C1614.01 657.70 1625.82 657.70 1634.69 657.70 C1643.55 657.70 1662.42 657.70 1664.23 657.70 C1680.15 588.15 1684.92 399.50 1693.78 399.50 C1702.64 399.50 1707.41 588.15 1723.32 657.70 C1725.13 657.70 1744.01 657.70 1752.87 657.70 C1761.73 657.70 1773.55 657.70 1782.42 657.70 C1791.28 657.70 1803.10 657.70 1811.96 657.70 C1820.83 657.70 1832.64 657.70 1841.51 657.70 C1850.37 657.70 1862.19 657.70 1871.05 657.70 C1879.92 657.70 1891.74 657.70 1900.60 657.70" fill="none" stroke="#c1513b" stroke-width="3.75" stroke-linejoin="round"/><circle cx="1191.50" cy="657.70" r="2.1" fill="rgba(193,81,59,0.15)" stroke="#c1513b" stroke-width="1.25"/><circle cx="1221.05" cy="657.70" r="2.1" fill="rgba(193,81,59,0.15)" stroke="#c1513b" stroke-width="1.25"/><circle cx="1250.59" cy="657.70" r="2.1" fill="rgba(193,81,59,0.15)" stroke="#c1513b" stroke-width="1.25"/><circle cx="1280.14" cy="657.70" r="2.1" fill="rgba(193,81,59,0.15)" stroke="#c1513b" stroke-width="1.25"/><circle cx="1309.68" cy="657.70" r="2.1" fill="rgba(193,81,59,0.15)" stroke="#c1513b" stroke-width="1.25"/><circle cx="1339.23" cy="657.70" r="2.1" fill="rgba(193,81,59,0.15)" stroke="#c1513b" stroke-width="1.25"/><circle cx="1368.78" cy="657.70" r="2.1" fill="rgba(193,81,59,0.15)" stroke="#c1513b" stroke-width="1.25"/><circle cx="1398.32" cy="657.70" r="2.1" fill="rgba(193,81,59,0.15)" stroke="#c1513b" stroke-width="1.25"/><circle cx="1427.87" cy="657.70" r="2.1" fill="rgba(193,81,59,0.15)" stroke="#c1513b" stroke-width="1.25"/><circle cx="1457.41" cy="657.70" r="2.1" fill="rgba(193,81,59,0.15)" stroke="#c1513b" stroke-width="1.25"/><circle cx="1486.96" cy="657.70" r="2.1" fill="rgba(193,81,59,0.15)" stroke="#c1513b" stroke-width="1.25"/><circle cx="1516.50" cy="657.70" r="2.1" fill="rgba(193,81,59,0.15)" stroke="#c1513b" stroke-width="1.25"/><circle cx="1546.05" cy="657.70" r="2.1" fill="rgba(193,81,59,0.15)" stroke="#c1513b" stroke-width="1.25"/><circle cx="1575.60" cy="657.70" r="2.1" fill="rgba(193,81,59,0.15)" stroke="#c1513b" stroke-width="1.25"/><circle cx="1605.14" cy="657.70" r="2.1" fill="rgba(193,81,59,0.15)" stroke="#c1513b" stroke-width="1.25"/><circle cx="1634.69" cy="657.70" r="2.1" fill="rgba(193,81,59,0.15)" stroke="#c1513b" stroke-width="1.25"/><circle cx="1664.23" cy="657.70" r="2.1" fill="rgba(193,81,59,0.15)" stroke="#c1513b" stroke-width="1.25"/><circle cx="1693.78" cy="399.50" r="2.1" fill="rgba(193,81,59,0.15)" stroke="#c1513b" stroke-width="1.25"/><circle cx="1723.32" cy="657.70" r="2.1" fill="rgba(193,81,59,0.15)" stroke="#c1513b" stroke-width="1.25"/><circle cx="1752.87" cy="657.70" r="2.1" fill="rgba(193,81,59,0.15)" stroke="#c1513b" stroke-width="1.25"/><circle cx="1782.42" cy="657.70" r="2.1" fill="rgba(193,81,59,0.15)" stroke="#c1513b" stroke-width="1.25"/><circle cx="1811.96" cy="657.70" r="2.1" fill="rgba(193,81,59,0.15)" stroke="#c1513b" stroke-width="1.25"/><circle cx="1841.51" cy="657.70" r="2.1" fill="rgba(193,81,59,0.15)" stroke="#c1513b" stroke-width="1.25"/><circle cx="1871.05" cy="657.70" r="2.1" fill="rgba(193,81,59,0.15)" stroke="#c1513b" stroke-width="1.25"/><circle cx="1900.60" cy="657.70" r="2.1" fill="rgba(193,81,59,0.15)" stroke="#c1513b" stroke-width="1.25"/></svg>
<svg style="position:absolute;left:322.00px;top:822.00px;overflow:visible" width="796.00" height="387.00" viewBox="322.00 822.00 796.00 387.00" ><rect x="497.41" y="849.50" width="50.00" height="15.00" fill="#2e6e97"/><text x="554.91" y="860.70" font-size="15" fill="#94a3b8">Login</text><rect x="604.12" y="849.50" width="50.00" height="15.00" fill="#4a9468"/><text x="661.62" y="860.70" font-size="15" fill="#94a3b8">Logout</text><rect x="720.01" y="849.50" width="50.00" height="15.00" fill="#d9a043"/><text x="777.51" y="860.70" font-size="15" fill="#94a3b8">Query</text><rect x="830.87" y="849.50" width="50.00" height="15.00" fill="#c0503b"/><text x="888.37" y="860.70" font-size="15" fill="#94a3b8">Manage</text><line x1="402.50" y1="1133.40" x2="1094.50" y2="1133.40" stroke="rgba(148,163,184,0.1)" stroke-width="1.25"/><text x="398.75" y="1137.90" font-size="15" fill="#94a3b8" text-anchor="end">0</text><line x1="402.50" y1="1107.71" x2="1094.50" y2="1107.71" stroke="rgba(148,163,184,0.1)" stroke-width="1.25"/><text x="398.75" y="1112.21" font-size="15" fill="#94a3b8" text-anchor="end">20,000</text><line x1="402.50" y1="1082.02" x2="1094.50" y2="1082.02" stroke="rgba(148,163,184,0.1)" stroke-width="1.25"/><text x="398.75" y="1086.52" font-size="15" fill="#94a3b8" text-anchor="end">40,000</text><line x1="402.50" y1="1056.33" x2="1094.50" y2="1056.33" stroke="rgba(148,163,184,0.1)" stroke-width="1.25"/><text x="398.75" y="1060.83" font-size="15" fill="#94a3b8" text-anchor="end">60,000</text><line x1="402.50" y1="1030.64" x2="1094.50" y2="1030.64" stroke="rgba(148,163,184,0.1)" stroke-width="1.25"/><text x="398.75" y="1035.14" font-size="15" fill="#94a3b8" text-anchor="end">80,000</text><line x1="402.50" y1="1004.95" x2="1094.50" y2="1004.95" stroke="rgba(148,163,184,0.1)" stroke-width="1.25"/><text x="398.75" y="1009.45" font-size="15" fill="#94a3b8" text-anchor="end">100,000</text><line x1="402.50" y1="979.26" x2="1094.50" y2="979.26" stroke="rgba(148,163,184,0.1)" stroke-width="1.25"/><text x="398.75" y="983.76" font-size="15" fill="#94a3b8" text-anchor="end">120,000</text><line x1="402.50" y1="953.57" x2="1094.50" y2="953.57" stroke="rgba(148,163,184,0.1)" stroke-width="1.25"/><text x="398.75" y="958.07" font-size="15" fill="#94a3b8" text-anchor="end">140,000</text><line x1="402.50" y1="927.88" x2="1094.50" y2="927.88" stroke="rgba(148,163,184,0.1)" stroke-width="1.25"/><text x="398.75" y="932.38" font-size="15" fill="#94a3b8" text-anchor="end">160,000</text><line x1="402.50" y1="902.19" x2="1094.50" y2="902.19" stroke="rgba(148,163,184,0.1)" stroke-width="1.25"/><text x="398.75" y="906.69" font-size="15" fill="#94a3b8" text-anchor="end">180,000</text><line x1="402.50" y1="876.50" x2="1094.50" y2="876.50" stroke="rgba(148,163,184,0.1)" stroke-width="1.25"/><text x="398.75" y="881.00" font-size="15" fill="#94a3b8" text-anchor="end">200,000</text><line x1="453.42" y1="876.50" x2="453.42" y2="1143.40" stroke="rgba(148,163,184,0.1)" stroke-width="1.25"/><line x1="507.98" y1="876.50" x2="507.98" y2="1143.40" stroke="rgba(148,163,184,0.1)" stroke-width="1.25"/><line x1="562.54" y1="876.50" x2="562.54" y2="1143.40" stroke="rgba(148,163,184,0.1)" stroke-width="1.25"/><line x1="617.10" y1="876.50" x2="617.10" y2="1143.40" stroke="rgba(148,163,184,0.1)" stroke-width="1.25"/><line x1="671.66" y1="876.50" x2="671.66" y2="1143.40" stroke="rgba(148,163,184,0.1)" stroke-width="1.25"/><line x1="726.22" y1="876.50" x2="726.22" y2="1143.40" stroke="rgba(148,163,184,0.1)" stroke-width="1.25"/><line x1="780.78" y1="876.50" x2="780.78" y2="1143.40" stroke="rgba(148,163,184,0.1)" stroke-width="1.25"/><line x1="835.34" y1="876.50" x2="835.34" y2="1143.40" stroke="rgba(148,163,184,0.1)" stroke-width="1.25"/><line x1="889.90" y1="876.50" x2="889.90" y2="1143.40" stroke="rgba(148,163,184,0.1)" stroke-width="1.25"/><line x1="944.46" y1="876.50" x2="944.46" y2="1143.40" stroke="rgba(148,163,184,0.1)" stroke-width="1.25"/><line x1="999.02" y1="876.50" x2="999.02" y2="1143.40" stroke="rgba(148,163,184,0.1)" stroke-width="1.25"/><line x1="1053.58" y1="876.50" x2="1053.58" y2="1143.40" stroke="rgba(148,163,184,0.1)" stroke-width="1.25"/><line x1="412.50" y1="876.50" x2="412.50" y2="1133.40" stroke="rgba(0,0,0,0.1)" stroke-width="1.25"/><line x1="412.50" y1="1133.40" x2="1094.50" y2="1133.40" stroke="rgba(0,0,0,0.1)" stroke-width="1.25"/><text x="425.44" y="1158.25" font-size="15" fill="#94a3b8" text-anchor="end" transform="rotate(-45 425.44 1152.85)">20:00</text><text x="480.00" y="1158.25" font-size="15" fill="#94a3b8" text-anchor="end" transform="rotate(-45 480.00 1152.85)">22:00</text><text x="534.56" y="1158.25" font-size="15" fill="#94a3b8" text-anchor="end" transform="rotate(-45 534.56 1152.85)">00:00</text><text x="589.12" y="1158.25" font-size="15" fill="#94a3b8" text-anchor="end" transform="rotate(-45 589.12 1152.85)">02:00</text><text x="643.68" y="1158.25" font-size="15" fill="#94a3b8" text-anchor="end" transform="rotate(-45 643.68 1152.85)">04:00</text><text x="698.24" y="1158.25" font-size="15" fill="#94a3b8" text-anchor="end" transform="rotate(-45 698.24 1152.85)">06:00</text><text x="752.80" y="1158.25" font-size="15" fill="#94a3b8" text-anchor="end" transform="rotate(-45 752.80 1152.85)">08:00</text><text x="807.36" y="1158.25" font-size="15" fill="#94a3b8" text-anchor="end" transform="rotate(-45 807.36 1152.85)">10:00</text><text x="861.92" y="1158.25" font-size="15" fill="#94a3b8" text-anchor="end" transform="rotate(-45 861.92 1152.85)">12:00</text><text x="916.48" y="1158.25" font-size="15" fill="#94a3b8" text-anchor="end" transform="rotate(-45 916.48 1152.85)">14:00</text><text x="971.04" y="1158.25" font-size="15" fill="#94a3b8" text-anchor="end" transform="rotate(-45 971.04 1152.85)">16:00</text><text x="1025.60" y="1158.25" font-size="15" fill="#94a3b8" text-anchor="end" transform="rotate(-45 1025.60 1152.85)">18:00</text><text x="1080.16" y="1158.25" font-size="15" fill="#94a3b8" text-anchor="end" transform="rotate(-45 1080.16 1152.85)">20:00</text><rect x="825.52" y="1131.60" width="19.64" height="1.80" fill="#2e6e97"/><rect x="825.52" y="1129.29" width="19.64" height="2.31" fill="#4a9468"/><rect x="825.52" y="1030.64" width="19.64" height="98.65" fill="#d9a043"/><rect x="825.52" y="1029.48" width="19.64" height="1.16" fill="#c0503b"/><rect x="852.80" y="1127.49" width="19.64" height="5.91" fill="#2e6e97"/><rect x="852.80" y="1121.33" width="19.64" height="6.17" fill="#4a9468"/><rect x="852.80" y="900.26" width="19.64" height="221.06" fill="#d9a043"/><rect x="852.80" y="897.95" width="19.64" height="2.31" fill="#c0503b"/><rect x="880.08" y="1127.88" width="19.64" height="5.52" fill="#2e6e97"/><rect x="880.08" y="1121.58" width="19.64" height="6.29" fill="#4a9468"/><rect x="880.08" y="950.87" width="19.64" height="170.71" fill="#d9a043"/><rect x="880.08" y="948.82" width="19.64" height="2.06" fill="#c0503b"/><rect x="907.36" y="1129.16" width="19.64" height="4.24" fill="#2e6e97"/><rect x="907.36" y="1124.15" width="19.64" height="5.01" fill="#4a9468"/><rect x="907.36" y="938.28" width="19.64" height="185.87" fill="#d9a043"/><rect x="907.36" y="936.10" width="19.64" height="2.18" fill="#c0503b"/><rect x="934.64" y="1128.90" width="19.64" height="4.50" fill="#2e6e97"/><rect x="934.64" y="1123.38" width="19.64" height="5.52" fill="#4a9468"/><rect x="934.64" y="926.60" width="19.64" height="196.79" fill="#d9a043"/><rect x="934.64" y="924.41" width="19.64" height="2.18" fill="#c0503b"/><rect x="961.92" y="1126.72" width="19.64" height="6.68" fill="#2e6e97"/><rect x="961.92" y="1119.40" width="19.64" height="7.32" fill="#4a9468"/><rect x="961.92" y="902.45" width="19.64" height="216.95" fill="#d9a043"/><rect x="961.92" y="900.13" width="19.64" height="2.31" fill="#c0503b"/><rect x="989.20" y="1127.49" width="19.64" height="5.91" fill="#2e6e97"/><rect x="989.20" y="1121.07" width="19.64" height="6.42" fill="#4a9468"/><rect x="989.20" y="903.09" width="19.64" height="217.98" fill="#d9a043"/><rect x="989.20" y="900.91" width="19.64" height="2.18" fill="#c0503b"/><rect x="1016.48" y="1127.23" width="19.64" height="6.17" fill="#2e6e97"/><rect x="1016.48" y="1120.56" width="19.64" height="6.68" fill="#4a9468"/><rect x="1016.48" y="912.98" width="19.64" height="207.58" fill="#d9a043"/><rect x="1016.48" y="910.67" width="19.64" height="2.31" fill="#c0503b"/><rect x="1043.76" y="1128.39" width="19.64" height="5.01" fill="#2e6e97"/><rect x="1043.76" y="1122.35" width="19.64" height="6.04" fill="#4a9468"/><rect x="1043.76" y="917.48" width="19.64" height="204.88" fill="#d9a043"/><rect x="1043.76" y="915.16" width="19.64" height="2.31" fill="#c0503b"/><rect x="1071.04" y="1130.57" width="19.64" height="2.83" fill="#2e6e97"/><rect x="1071.04" y="1126.85" width="19.64" height="3.73" fill="#4a9468"/><rect x="1071.04" y="1020.75" width="19.64" height="106.10" fill="#d9a043"/><rect x="1071.04" y="1019.34" width="19.64" height="1.41" fill="#c0503b"/></svg>
<svg style="position:absolute;left:1142.00px;top:822.00px;overflow:visible" width="796.00" height="387.00" viewBox="1142.00 822.00 796.00 387.00" ><rect x="1362.16" y="849.50" width="50.00" height="15.00" fill="#2e6e97"/><text x="1419.66" y="860.70" font-size="15" fill="#94a3b8">Read</text><rect x="1468.02" y="849.50" width="50.00" height="15.00" fill="#d9a043"/><text x="1525.52" y="860.70" font-size="15" fill="#94a3b8">Write</text><rect x="1572.76" y="849.50" width="50.00" height="15.00" fill="#c0503b"/><text x="1630.26" y="860.70" font-size="15" fill="#94a3b8">Management</text><line x1="1222.40" y1="1133.40" x2="1914.50" y2="1133.40" stroke="rgba(148,163,184,0.1)" stroke-width="1.25"/><text x="1218.65" y="1137.90" font-size="15" fill="#94a3b8" text-anchor="end">0</text><line x1="1222.40" y1="1104.86" x2="1914.50" y2="1104.86" stroke="rgba(148,163,184,0.1)" stroke-width="1.25"/><text x="1218.65" y="1109.36" font-size="15" fill="#94a3b8" text-anchor="end">20,000</text><line x1="1222.40" y1="1076.31" x2="1914.50" y2="1076.31" stroke="rgba(148,163,184,0.1)" stroke-width="1.25"/><text x="1218.65" y="1080.81" font-size="15" fill="#94a3b8" text-anchor="end">40,000</text><line x1="1222.40" y1="1047.77" x2="1914.50" y2="1047.77" stroke="rgba(148,163,184,0.1)" stroke-width="1.25"/><text x="1218.65" y="1052.27" font-size="15" fill="#94a3b8" text-anchor="end">60,000</text><line x1="1222.40" y1="1019.22" x2="1914.50" y2="1019.22" stroke="rgba(148,163,184,0.1)" stroke-width="1.25"/><text x="1218.65" y="1023.72" font-size="15" fill="#94a3b8" text-anchor="end">80,000</text><line x1="1222.40" y1="990.68" x2="1914.50" y2="990.68" stroke="rgba(148,163,184,0.1)" stroke-width="1.25"/><text x="1218.65" y="995.18" font-size="15" fill="#94a3b8" text-anchor="end">100,000</text><line x1="1222.40" y1="962.13" x2="1914.50" y2="962.13" stroke="rgba(148,163,184,0.1)" stroke-width="1.25"/><text x="1218.65" y="966.63" font-size="15" fill="#94a3b8" text-anchor="end">120,000</text><line x1="1222.40" y1="933.59" x2="1914.50" y2="933.59" stroke="rgba(148,163,184,0.1)" stroke-width="1.25"/><text x="1218.65" y="938.09" font-size="15" fill="#94a3b8" text-anchor="end">140,000</text><line x1="1222.40" y1="905.04" x2="1914.50" y2="905.04" stroke="rgba(148,163,184,0.1)" stroke-width="1.25"/><text x="1218.65" y="909.54" font-size="15" fill="#94a3b8" text-anchor="end">160,000</text><line x1="1222.40" y1="876.50" x2="1914.50" y2="876.50" stroke="rgba(148,163,184,0.1)" stroke-width="1.25"/><text x="1218.65" y="881.00" font-size="15" fill="#94a3b8" text-anchor="end">180,000</text><line x1="1273.33" y1="876.50" x2="1273.33" y2="1143.40" stroke="rgba(148,163,184,0.1)" stroke-width="1.25"/><line x1="1327.89" y1="876.50" x2="1327.89" y2="1143.40" stroke="rgba(148,163,184,0.1)" stroke-width="1.25"/><line x1="1382.46" y1="876.50" x2="1382.46" y2="1143.40" stroke="rgba(148,163,184,0.1)" stroke-width="1.25"/><line x1="1437.03" y1="876.50" x2="1437.03" y2="1143.40" stroke="rgba(148,163,184,0.1)" stroke-width="1.25"/><line x1="1491.60" y1="876.50" x2="1491.60" y2="1143.40" stroke="rgba(148,163,184,0.1)" stroke-width="1.25"/><line x1="1546.17" y1="876.50" x2="1546.17" y2="1143.40" stroke="rgba(148,163,184,0.1)" stroke-width="1.25"/><line x1="1600.73" y1="876.50" x2="1600.73" y2="1143.40" stroke="rgba(148,163,184,0.1)" stroke-width="1.25"/><line x1="1655.30" y1="876.50" x2="1655.30" y2="1143.40" stroke="rgba(148,163,184,0.1)" stroke-width="1.25"/><line x1="1709.87" y1="876.50" x2="1709.87" y2="1143.40" stroke="rgba(148,163,184,0.1)" stroke-width="1.25"/><line x1="1764.44" y1="876.50" x2="1764.44" y2="1143.40" stroke="rgba(148,163,184,0.1)" stroke-width="1.25"/><line x1="1819.01" y1="876.50" x2="1819.01" y2="1143.40" stroke="rgba(148,163,184,0.1)" stroke-width="1.25"/><line x1="1873.57" y1="876.50" x2="1873.57" y2="1143.40" stroke="rgba(148,163,184,0.1)" stroke-width="1.25"/><line x1="1232.40" y1="876.50" x2="1232.40" y2="1133.40" stroke="rgba(0,0,0,0.1)" stroke-width="1.25"/><line x1="1232.40" y1="1133.40" x2="1914.50" y2="1133.40" stroke="rgba(0,0,0,0.1)" stroke-width="1.25"/><text x="1245.34" y="1158.25" font-size="15" fill="#94a3b8" text-anchor="end" transform="rotate(-45 1245.34 1152.85)">20:00</text><text x="1299.91" y="1158.25" font-size="15" fill="#94a3b8" text-anchor="end" transform="rotate(-45 1299.91 1152.85)">22:00</text><text x="1354.48" y="1158.25" font-size="15" fill="#94a3b8" text-anchor="end" transform="rotate(-45 1354.48 1152.85)">00:00</text><text x="1409.05" y="1158.25" font-size="15" fill="#94a3b8" text-anchor="end" transform="rotate(-45 1409.05 1152.85)">02:00</text><text x="1463.61" y="1158.25" font-size="15" fill="#94a3b8" text-anchor="end" transform="rotate(-45 1463.61 1152.85)">04:00</text><text x="1518.18" y="1158.25" font-size="15" fill="#94a3b8" text-anchor="end" transform="rotate(-45 1518.18 1152.85)">06:00</text><text x="1572.75" y="1158.25" font-size="15" fill="#94a3b8" text-anchor="end" transform="rotate(-45 1572.75 1152.85)">08:00</text><text x="1627.32" y="1158.25" font-size="15" fill="#94a3b8" text-anchor="end" transform="rotate(-45 1627.32 1152.85)">10:00</text><text x="1681.89" y="1158.25" font-size="15" fill="#94a3b8" text-anchor="end" transform="rotate(-45 1681.89 1152.85)">12:00</text><text x="1736.45" y="1158.25" font-size="15" fill="#94a3b8" text-anchor="end" transform="rotate(-45 1736.45 1152.85)">14:00</text><text x="1791.02" y="1158.25" font-size="15" fill="#94a3b8" text-anchor="end" transform="rotate(-45 1791.02 1152.85)">16:00</text><text x="1845.59" y="1158.25" font-size="15" fill="#94a3b8" text-anchor="end" transform="rotate(-45 1845.59 1152.85)">18:00</text><text x="1900.16" y="1158.25" font-size="15" fill="#94a3b8" text-anchor="end" transform="rotate(-45 1900.16 1152.85)">20:00</text><rect x="1645.48" y="1041.06" width="19.64" height="92.34" fill="#2e6e97"/><rect x="1645.48" y="1025.22" width="19.64" height="15.84" fill="#d9a043"/><rect x="1645.48" y="1023.36" width="19.64" height="1.86" fill="#c0503b"/><rect x="1672.76" y="925.31" width="19.64" height="208.09" fill="#2e6e97"/><rect x="1672.76" y="888.35" width="19.64" height="36.97" fill="#d9a043"/><rect x="1672.76" y="885.49" width="19.64" height="2.85" fill="#c0503b"/><rect x="1700.05" y="972.27" width="19.64" height="161.13" fill="#2e6e97"/><rect x="1700.05" y="943.72" width="19.64" height="28.54" fill="#d9a043"/><rect x="1700.05" y="941.87" width="19.64" height="1.86" fill="#c0503b"/><rect x="1727.33" y="958.99" width="19.64" height="174.41" fill="#2e6e97"/><rect x="1727.33" y="927.17" width="19.64" height="31.83" fill="#d9a043"/><rect x="1727.33" y="924.60" width="19.64" height="2.57" fill="#c0503b"/><rect x="1754.62" y="948.15" width="19.64" height="185.25" fill="#2e6e97"/><rect x="1754.62" y="914.46" width="19.64" height="33.68" fill="#d9a043"/><rect x="1754.62" y="912.32" width="19.64" height="2.14" fill="#c0503b"/><rect x="1781.90" y="929.31" width="19.64" height="204.09" fill="#2e6e97"/><rect x="1781.90" y="892.77" width="19.64" height="36.54" fill="#d9a043"/><rect x="1781.90" y="890.20" width="19.64" height="2.57" fill="#c0503b"/><rect x="1809.18" y="928.17" width="19.64" height="205.23" fill="#2e6e97"/><rect x="1809.18" y="891.63" width="19.64" height="36.54" fill="#d9a043"/><rect x="1809.18" y="888.77" width="19.64" height="2.85" fill="#c0503b"/><rect x="1836.47" y="937.30" width="19.64" height="196.10" fill="#2e6e97"/><rect x="1836.47" y="902.48" width="19.64" height="34.82" fill="#d9a043"/><rect x="1836.47" y="900.33" width="19.64" height="2.14" fill="#c0503b"/><rect x="1863.75" y="940.15" width="19.64" height="193.25" fill="#2e6e97"/><rect x="1863.75" y="906.47" width="19.64" height="33.68" fill="#d9a043"/><rect x="1863.75" y="903.90" width="19.64" height="2.57" fill="#c0503b"/><rect x="1891.04" y="1033.21" width="19.64" height="100.19" fill="#2e6e97"/><rect x="1891.04" y="1015.80" width="19.64" height="17.41" fill="#d9a043"/><rect x="1891.04" y="1014.23" width="19.64" height="1.57" fill="#c0503b"/></svg>
</main></body></html>
